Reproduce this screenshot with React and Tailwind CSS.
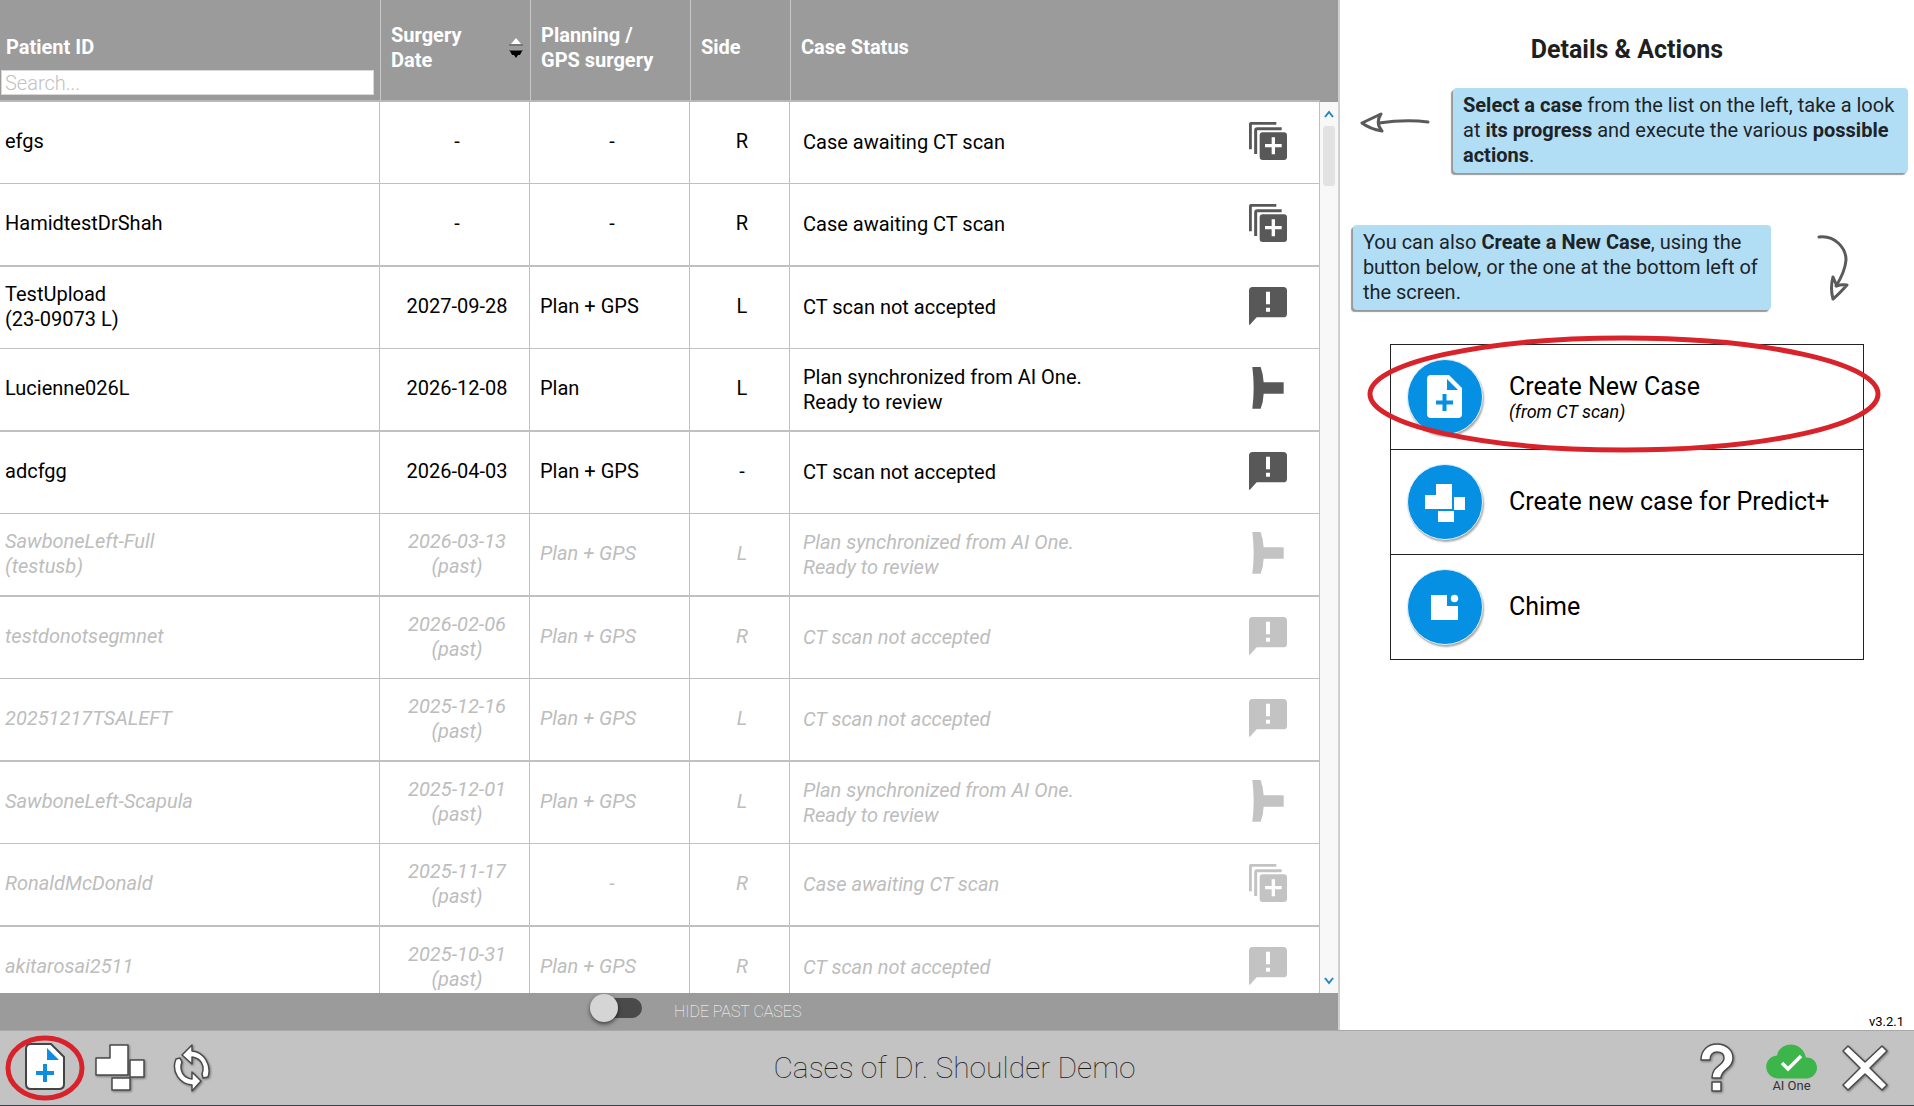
import React from "react";

const cases = [
  { id: ["efgs"], date: "-", plan: "-", side: "R", status: ["Case awaiting CT scan"], icon: "stack" },
  { id: ["HamidtestDrShah"], date: "-", plan: "-", side: "R", status: ["Case awaiting CT scan"], icon: "stack" },
  { id: ["TestUpload", "(23-09073 L)"], date: "2027-09-28", plan: "Plan + GPS", side: "L", status: ["CT scan not accepted"], icon: "alert" },
  { id: ["Lucienne026L"], date: "2026-12-08", plan: "Plan", side: "L", status: ["Plan synchronized from AI One.", "Ready to review"], icon: "implant" },
  { id: ["adcfgg"], date: "2026-04-03", plan: "Plan + GPS", side: "-", status: ["CT scan not accepted"], icon: "alert" },
  { id: ["SawboneLeft-Full", "(testusb)"], date: "2026-03-13", past: true, plan: "Plan + GPS", side: "L", status: ["Plan synchronized from AI One.", "Ready to review"], icon: "implant" },
  { id: ["testdonotsegmnet"], date: "2026-02-06", past: true, plan: "Plan + GPS", side: "R", status: ["CT scan not accepted"], icon: "alert" },
  { id: ["20251217TSALEFT"], date: "2025-12-16", past: true, plan: "Plan + GPS", side: "L", status: ["CT scan not accepted"], icon: "alert" },
  { id: ["SawboneLeft-Scapula"], date: "2025-12-01", past: true, plan: "Plan + GPS", side: "L", status: ["Plan synchronized from AI One.", "Ready to review"], icon: "implant" },
  { id: ["RonaldMcDonald"], date: "2025-11-17", past: true, plan: "-", side: "R", status: ["Case awaiting CT scan"], icon: "stack" },
  { id: ["akitarosai2511"], date: "2025-10-31", past: true, plan: "Plan + GPS", side: "R", status: ["CT scan not accepted"], icon: "alert" },
];

function StatusIcon({ kind }) {
  if (kind === "stack") {
    return (
      <svg viewBox="0 0 114 114" className="w-[38px] h-[38px] shrink-0" fill="none" stroke="currentColor" aria-hidden="true">
        <path d="M4 82V9q0-5 5-5h73" strokeWidth="9" />
        <path d="M20 96V25q0-5 5-5h73" strokeWidth="9" />
        <rect x="32" y="31" width="82" height="83" rx="9" fill="currentColor" stroke="none" />
        <path d="M48 71h50M73 46v51" stroke="white" strokeWidth="10" />
      </svg>
    );
  }
  if (kind === "alert") {
    return (
      <svg viewBox="0 0 114 114" className="w-[38px] h-[38px] shrink-0" fill="currentColor" aria-hidden="true">
        <path d="M11 0H103q11 0 11 11V80q0 11-11 11H23L2 114 0 112V11Q0 0 11 0Z" />
        <path d="M51 14h12v38h-12zM51 62h12v12h-12z" fill="white" />
      </svg>
    );
  }
  return (
    <svg viewBox="0 0 114 126" className="w-[38px] h-[42px] shrink-0" fill="currentColor" aria-hidden="true">
      <path d="M10 0H35Q43 22 44 46H104V80H44Q43 104 35 125H10Q18 62 10 0Z" />
    </svg>
  );
}

function SortArrows() {
  return (
    <svg viewBox="0 0 14 20" className="w-[14px] h-5 shrink-0" aria-hidden="true">
      <path d="M7 0 12 6H2Z" fill="white" />
      <path d="M0 7h14M0 12.500h14" stroke="#555" strokeWidth="1" />
      <path d="M1 13H13L11 17H9L7 20 5 17H3Z" fill="black" />
    </svg>
  );
}

function CaseRow({ row, index }) {
  const line = index % 2 ? "border-b-2" : "border-b";
  const height = index % 2 ? "h-[83px]" : "h-[82px]";
  return (
    <tr className={`${height} ${row.past ? "italic text-[#bdbdbd]" : "text-black"}`}>
      <td className={`border-r ${line} border-[#c0c0c0] pb-[2px] pl-[5px]`}>
        {row.id.map((t) => <div key={t}>{t}</div>)}
      </td>
      <td className={`border-r ${line} border-[#c0c0c0] pb-[2px] pl-[5px] text-center`}>
        <div>{row.date}</div>
        {row.past && <div>(past)</div>}
      </td>
      <td className={`border-r ${line} border-[#c0c0c0] pb-[2px] ${row.plan === "-" ? "pl-[5px] text-center" : "pl-[10px]"}`}>
        {row.plan}
      </td>
      <td className={`border-r ${line} border-[#c0c0c0] pb-[2px] pl-[5px] text-center`}>{row.side}</td>
      <td className={`border-r ${line} border-[#c0c0c0] pl-[13px] pr-8`}>
        <div className="flex items-center justify-between">
          <div>{row.status.map((t) => <div key={t}>{t}</div>)}</div>
          <span className={`pb-[3px] ${row.past ? "text-[#c3c3c3]" : "text-[#585858]"}`}><StatusIcon kind={row.icon} /></span>
        </div>
      </td>
    </tr>
  );
}

function CaseTable() {
  const th = "border-l border-b-2 border-l-[#c8c8c8] border-b-[#b8b8b8] pl-[10px] pb-[5px] text-left align-middle font-bold";
  return (
    <table className="w-full table-fixed border-separate border-spacing-0">
      <colgroup>
        <col className="w-[380px]" />
        <col className="w-[150px]" />
        <col className="w-[160px]" />
        <col className="w-[100px]" />
        <col />
      </colgroup>
      <thead className="bg-[#9b9b9b] text-white">
        <tr className="h-[102px]">
          <th className="border-b-2 border-b-[#b8b8b8] pt-[35px] pl-px pr-[6px] text-left align-top font-bold">
            <label htmlFor="patient-search" className="block pl-[5px]">Patient ID</label>
            <input
              id="patient-search"
              type="text"
              placeholder="Search..."
              className="mt-[10px] block h-[25px] w-full border border-[#d8d8d8] bg-white px-[3px] text-[20px] leading-[23px] font-light text-black placeholder:text-[#c2c2c2] outline-none"
            />
          </th>
          <th className={th}>
            <div className="flex items-center justify-between pr-[7px]">
              <span>Surgery<br />Date</span>
              <button type="button" aria-label="Sort by surgery date"><SortArrows /></button>
            </div>
          </th>
          <th className={th}>Planning /<br />GPS surgery</th>
          <th className={th}>Side</th>
          <th className={th}>Case Status</th>
        </tr>
      </thead>
      <tbody>
        {cases.map((row, i) => <CaseRow key={row.id[0]} row={row} index={i} />)}
      </tbody>
    </table>
  );
}

function ScrollBar() {
  return (
    <div className="flex w-[18px] shrink-0 flex-col">
      <div className="h-[102px] shrink-0 bg-[#9b9b9b]" />
      <div className="flex flex-1 flex-col items-center justify-between bg-[#f8f8f8] py-2">
        <div className="flex flex-col items-center gap-2">
          <button type="button" aria-label="Scroll up">
            <svg viewBox="0 0 10 8" className="h-2 w-[10px]" fill="none" stroke="#2186c4" strokeWidth="2"><path d="M1 7 5 2 9 7" /></svg>
          </button>
          <div className="h-[60px] w-3 rounded-[3px] bg-[#e2e2e2]" />
        </div>
        <button type="button" aria-label="Scroll down">
          <svg viewBox="0 0 10 8" className="h-2 w-[10px]" fill="none" stroke="#2186c4" strokeWidth="2"><path d="M1 1 5 6 9 1" /></svg>
        </button>
      </div>
    </div>
  );
}

function PastToggle() {
  return (
    <div className="flex h-[37px] shrink-0 items-center bg-[#9b9b9b] pl-[591px]">
      <label className="flex items-center gap-8">
        <input type="checkbox" role="switch" className="peer sr-only" />
        <span className="-mt-2 flex h-5 w-[51px] items-center rounded-full bg-[#4a4a4a]">
          <span className="-ml-px h-7 w-7 shrink-0 rounded-full bg-[#d5d5d5] shadow-[0_2px_4px_rgba(0,0,0,0.6)]" />
        </span>
        <span className="text-[16px] leading-5 font-thin text-white">HIDE PAST CASES</span>
      </label>
    </div>
  );
}

function Callout({ children, className }) {
  return (
    <p className={`rounded-[4px] bg-[#b2def5] py-[5px] pl-[10px] text-[#1d2327] shadow-[-2px_2px_1px_#999] ${className}`}>
      {children}
    </p>
  );
}

function RoundIcon({ children }) {
  return (
    <span className="flex h-[76px] w-[76px] shrink-0 items-center justify-center rounded-full border border-[#e3f1fa] bg-[#0690e4] shadow-[1px_2px_2px_rgba(0,0,0,0.35)]">
      <svg viewBox="0 0 76 76" className="h-[76px] w-[76px] shrink-0" fill="white" aria-hidden="true">{children}</svg>
    </span>
  );
}

function Action({ icon, title, note }) {
  return (
    <button type="button" className="flex h-[105px] w-full items-center gap-[26px] border-b border-[#222] pl-4 text-left text-black">
      <RoundIcon>{icon}</RoundIcon>
      <span>
        <span className="block text-[25px] leading-[30px]">{title}</span>
        {note && <span className="block text-[18px] leading-5 italic">{note}</span>}
      </span>
    </button>
  );
}

function DetailsPanel() {
  return (
    <aside className="flex min-w-0 flex-1 flex-col border-l-2 border-[#d0d0d0] bg-white">
      <h2 className="pt-[35px] text-center text-[25px] leading-[30px] font-bold text-[#1f1f1f]">Details &amp; Actions</h2>
      <div className="mt-[23px] flex items-center justify-between pr-[6px] pl-5">
        <svg viewBox="0 0 70 22" className="-mt-4 h-[22px] w-[70px] shrink-0" fill="none" stroke="#5a5a5a" strokeWidth="3" strokeLinecap="round" strokeLinejoin="round" aria-hidden="true">
          <path d="M2 11 21 2Q15 11 22 19 10 17 2 11Z" />
          <path d="M19 11Q46 7 68 10" />
        </svg>
        <Callout className="w-[455px]">
          <b>Select a case</b> from the list on the left, take a look at <b>its progress</b> and execute the various <b>possible actions</b>.
        </Callout>
      </div>
      <div className="mt-[52px] flex items-center justify-between pr-[65px] pl-[13px]">
        <Callout className="w-[418px]">
          You can also <b>Create a New Case</b>, using the<br />button below, or the one at the bottom left of<br />the screen.
        </Callout>
        <svg viewBox="0 0 32 68" className="h-[68px] w-8 shrink-0" fill="none" stroke="#5a5a5a" strokeWidth="3" strokeLinecap="round" strokeLinejoin="round" aria-hidden="true">
          <path d="M2 3C18 1 29 14 29 26Q28 38 19 52" />
          <path d="M16 43Q13 54 16 65 22 60 30 51 24 50 20 52 18 48 16 43Z" />
        </svg>
      </div>
      <div className="relative mx-[50px] mt-[34px] border border-b-0 border-[#222]">
        <Action
          title="Create New Case"
          note="(from CT scan)"
          icon={
            <>
              <path d="M24 16H42L55 29V55q0 4-4 4H24q-4 0-4-4V20q0-4 4-4Z" />
              <path d="M40 20V31H51Z" fill="#0690e4" />
              <path d="M29 43.500h17M37.500 35v17" stroke="#0690e4" strokeWidth="4" />
            </>
          }
        />
        <Action
          title="Create new case for Predict+"
          icon={
            <>
              <path d="M29 20H45V45H18V31H29Z" />
              <rect x="47" y="33" width="11" height="13" />
              <rect x="31" y="47" width="16" height="11" />
            </>
          }
        />
        <Action
          title="Chime"
          icon={
            <>
              <path d="M24 26H40V37H51V51H24Z" />
              <circle cx="47.500" cy="29.500" r="3.700" />
            </>
          }
        />
        <svg viewBox="0 0 514 118" className="pointer-events-none absolute -top-[10px] -left-6 h-[118px] w-[514px]" fill="none" stroke="#d9232b" strokeWidth="5" aria-hidden="true">
          <ellipse cx="257" cy="59" rx="254" ry="56" />
        </svg>
      </div>
      <div className="mt-auto pr-[10px] text-right text-[13px] leading-4 text-black">v3.2.1</div>
    </aside>
  );
}

function Footer() {
  return (
    <footer className="flex h-[76px] shrink-0 items-center border-t border-b border-t-[#a8a8a8] border-b-[#3c4048] bg-[#c3c3c3]">
      <div className="flex flex-1 items-center pl-[5px]">
        <button type="button" aria-label="New case" className="shrink-0">
          <svg viewBox="0 0 80 66" className="h-[66px] w-20" aria-hidden="true">
            <path d="M26 9H46L59 22V49q0 5-5 5H26q-5 0-5-5V14q0-5 5-5Z" fill="white" stroke="#444" strokeWidth="2" />
            <path d="M42 13V25H54Z" fill="#0f8ee0" />
            <path d="M31 38H49M40 29V47" stroke="#0f8ee0" strokeWidth="4" />
            <ellipse cx="40" cy="33" rx="37" ry="30" fill="none" stroke="#d9232b" strokeWidth="5" />
          </svg>
        </button>
        <button type="button" aria-label="New Predict+ case" className="ml-[10px] shrink-0">
          <svg viewBox="0 0 50 48" className="h-12 w-[50px] drop-shadow-[1px_1px_1px_rgba(0,0,0,0.4)]" fill="white" stroke="#4a4a4a" strokeWidth="1.500" strokeLinejoin="round" aria-hidden="true">
            <path d="M15 1H33V31H1V14H15Z" />
            <rect x="35" y="16" width="14" height="17" />
            <rect x="17" y="34" width="18" height="12" />
          </svg>
        </button>
        <button type="button" aria-label="Refresh" className="ml-[28px] shrink-0">
          <svg viewBox="0 0 38 48" className="h-12 w-[38px] drop-shadow-[1px_1px_1px_rgba(0,0,0,0.4)]" fill="white" stroke="#4a4a4a" strokeWidth="1.500" strokeLinejoin="round" aria-hidden="true">
            <path d="M9 11 19 1V7C31 8 39 21 35 33L30 34 29 30C32 22 28 14 19 13V20Z" />
            <path d="M28 37 19 47V41C6 40-2 27 3 15L7 14 9 18C6 26 10 34 19 35V28Z" />
          </svg>
        </button>
      </div>
      <h1 className="pl-4 text-[30px] leading-9 font-thin text-[#1c1c1c]">Cases of Dr. Shoulder Demo</h1>
      <div className="flex flex-1 items-center justify-end pr-[26px]">
        <button type="button" aria-label="Help" className="shrink-0">
          <svg viewBox="0 0 34 50" className="h-[50px] w-[34px] drop-shadow-[1px_1px_1px_rgba(0,0,0,0.4)]" fill="white" stroke="#4a4a4a" strokeWidth="1.500" strokeLinejoin="round" aria-hidden="true">
            <path d="M1 17C1 7 8 1 17 1S33 7 33 15C33 26 21 26 21 35H12C12 22 24 23 24 15 24 11 21 9 17 9S10 12 10 17Z" />
            <rect x="12" y="39" width="9" height="9" />
          </svg>
        </button>
        <button type="button" className="ml-8 flex shrink-0 flex-col items-center text-[13px] leading-[14px] text-[#333]">
          <svg viewBox="0 0 51 35" className="h-[35px] w-[51px]" fill="none" aria-hidden="true">
            <path d="M12 34.500C-3 34-4 13 11 11.500 14-3 36-4 40 13.500 54 13 55 33 41 34.500Z" fill="#3cb54a" />
            <path d="M16 19 22 25 35 12" stroke="white" strokeWidth="3.500" />
          </svg>
          AI One
        </button>
        <button type="button" aria-label="Close" className="ml-[25px] shrink-0">
          <svg viewBox="0 0 46 46" className="h-[46px] w-[46px] drop-shadow-[1px_1px_1px_rgba(0,0,0,0.4)]" fill="white" stroke="#4a4a4a" strokeWidth="1.500" strokeLinejoin="round" aria-hidden="true">
            <path d="M6 1 23 17 40 1 45 6 28 23 45 40 40 45 23 29 6 45 1 40 18 23 1 6Z" />
          </svg>
        </button>
      </div>
    </footer>
  );
}

export default function App() {
  return (
    <div className="flex h-screen flex-col overflow-hidden bg-white font-['Roboto',sans-serif] text-[20px] leading-[25px]">
      <div className="flex min-h-0 flex-1">
        <main className="flex w-[69.9%] shrink-0 flex-col">
          <div className="flex min-h-0 flex-1">
            <div className="min-w-0 flex-1 overflow-hidden"><CaseTable /></div>
            <ScrollBar />
          </div>
          <PastToggle />
        </main>
        <DetailsPanel />
      </div>
      <Footer />
    </div>
  );
}
